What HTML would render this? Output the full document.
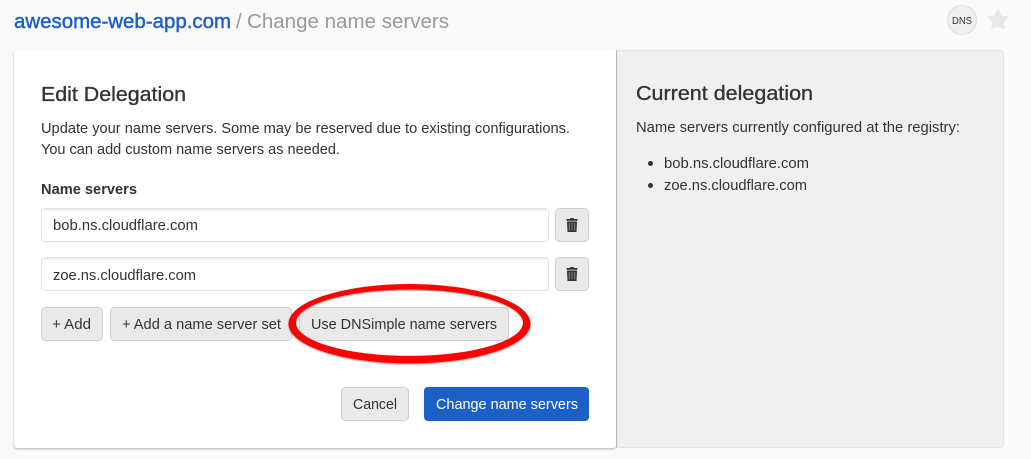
<!DOCTYPE html>
<html lang="en">
<head>
<meta charset="utf-8">
<title>Change name servers</title>
<style>
html,body{margin:0;padding:0;width:1031px;height:459px;overflow:hidden;background:#fafafa}
svg{display:block}
text{font-family:"Liberation Sans",sans-serif;fill:#333;font-size:14.5px}
.m{stroke:#333;stroke-width:.35px}
.btn{fill:#e9e9e9;stroke:#cfcfcf;stroke-width:1}
.inp{fill:#fff;stroke:#e3e3e3;stroke-width:1}
</style>
</head>
<body>
<svg width="1031" height="459" viewBox="0 0 1031 459" xmlns="http://www.w3.org/2000/svg">
<defs>
<filter id="s" x="-5%" y="-5%" width="110%" height="110%"><feDropShadow dx="0" dy="1" stdDeviation="1" flood-color="#000" flood-opacity=".3"/></filter>
<filter id="r" x="-5%" y="-10%" width="110%" height="125%"><feDropShadow dx="0" dy="1" stdDeviation=".8" flood-color="#000" flood-opacity=".4"/></filter>
<g id="trash">
<path fill="#333" d="M-5.500 -6.500H-2L-1.500 -7.500H1.500L2 -6.500H5.500V-4.800H-5.500z"/>
<path fill="#333" d="M-5 -4H5L4.500 6.500H-4.500z"/>
<path fill="#8a8a8a" d="M-3.200 -2.500H-2.200V5H-3.200zM-.5 -2.500H.5V5H-.5zM2.200 -2.500H3.200V5H2.200z"/>
</g>
</defs>
<rect width="1031" height="459" fill="#fafafa"/>

<text x="14" y="28" style="font-size:20.500px;fill:#1b5fc7;stroke:#1b5fc7;stroke-width:.45px" textLength="217" lengthAdjust="spacingAndGlyphs">awesome-web-app.com</text>
<text x="236" y="28" style="font-size:20.500px;fill:#999">/</text>
<text x="247" y="28" style="font-size:20.500px;fill:#999" textLength="202" lengthAdjust="spacingAndGlyphs">Change name servers</text>

<circle cx="962" cy="20" r="14.500" fill="#f0f0f0" stroke="#dedede"/>
<text x="952" y="24" style="font-size:10px" textLength="20" lengthAdjust="spacingAndGlyphs">DNS</text>
<path d="M998 9.500l3.100 6.600 7.100.9-5.200 4.900 1.400 7.100-6.400-3.500-6.400 3.500 1.400-7.100-5.200-4.900 7.100-.9z" fill="#e8e8e8" stroke="#e8e8e8" stroke-linejoin="round"/>

<rect x="616.500" y="50.500" width="387" height="397" rx="3" fill="#f0f0f0" stroke="#e4e4e4"/>
<rect x="616" y="50" width="1" height="398" fill="#c9c9c9"/>
<rect x="14" y="50" width="602" height="398" rx="3" fill="#fff" filter="url(#s)"/>

<text class="m" x="41" y="101" style="font-size:20.500px" textLength="145" lengthAdjust="spacingAndGlyphs">Edit Delegation</text>
<text x="41" y="133" textLength="529" lengthAdjust="spacingAndGlyphs">Update your name servers. Some may be reserved due to existing configurations.</text>
<text x="41" y="154" textLength="299" lengthAdjust="spacingAndGlyphs">You can add custom name servers as needed.</text>
<text x="41" y="194" font-weight="700" textLength="96" lengthAdjust="spacingAndGlyphs">Name servers</text>

<rect class="inp" x="41.500" y="208.500" width="507" height="33" rx="3"/>
<rect x="42" y="209" width="506" height="2" fill="#f1f1f1"/>
<text x="53" y="230" textLength="145" lengthAdjust="spacingAndGlyphs">bob.ns.cloudflare.com</text>
<rect class="btn" x="555.500" y="208.500" width="33" height="33" rx="4"/>
<use href="#trash" x="572" y="225.500"/>

<rect class="inp" x="41.500" y="257.500" width="507" height="33" rx="3"/>
<rect x="42" y="258" width="506" height="2" fill="#f1f1f1"/>
<text x="53" y="280" textLength="143" lengthAdjust="spacingAndGlyphs">zoe.ns.cloudflare.com</text>
<rect class="btn" x="555.500" y="257.500" width="33" height="33" rx="4"/>
<use href="#trash" x="572" y="274.500"/>

<rect class="btn" x="41.500" y="307.500" width="61" height="33" rx="4"/>
<text x="52" y="329" textLength="39" lengthAdjust="spacingAndGlyphs">+ Add</text>
<rect class="btn" x="110.500" y="307.500" width="181" height="33" rx="4"/>
<text x="122" y="329" textLength="159" lengthAdjust="spacingAndGlyphs">+ Add a name server set</text>
<rect class="btn" x="299.500" y="307.500" width="209" height="33" rx="4"/>
<text x="311" y="329" textLength="186" lengthAdjust="spacingAndGlyphs">Use DNSimple name servers</text>

<path filter="url(#r)" fill="#f00" fill-rule="evenodd" d="M288.500 323.700a121 39.700 0 1 0 242 0a121 39.700 0 1 0 -242 0zM296 322.700a113.500 33.200 0 1 1 227 0a113.500 33.200 0 1 1 -227 0z"/>

<rect class="btn" x="341.500" y="387.500" width="67" height="33" rx="4"/>
<text x="353" y="409" textLength="44" lengthAdjust="spacingAndGlyphs">Cancel</text>
<rect x="424" y="387" width="165" height="34" rx="4" fill="#1b5fc7"/>
<text x="436" y="409" style="fill:#fff" textLength="142" lengthAdjust="spacingAndGlyphs">Change name servers</text>

<text class="m" x="636" y="100" style="font-size:20.500px" textLength="177" lengthAdjust="spacingAndGlyphs">Current delegation</text>
<text x="636" y="132" textLength="324" lengthAdjust="spacingAndGlyphs">Name servers currently configured at the registry:</text>
<circle cx="650.500" cy="163.500" r="2.500" fill="#333"/>
<text x="664" y="168" textLength="145" lengthAdjust="spacingAndGlyphs">bob.ns.cloudflare.com</text>
<circle cx="650.500" cy="185.500" r="2.500" fill="#333"/>
<text x="664" y="190" textLength="143" lengthAdjust="spacingAndGlyphs">zoe.ns.cloudflare.com</text>
</svg>
</body>
</html>
